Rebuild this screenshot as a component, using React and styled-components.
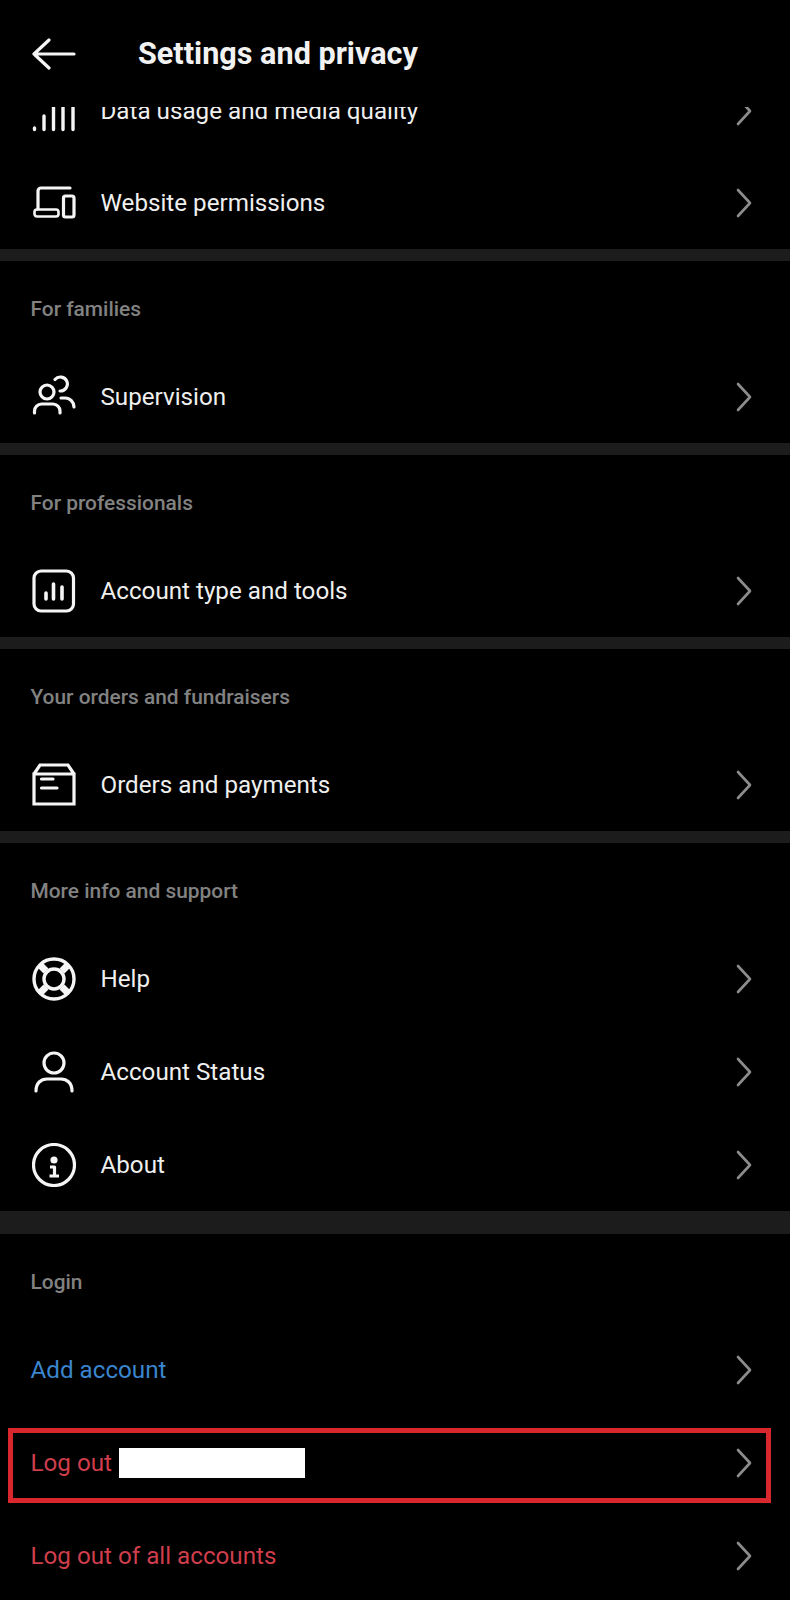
import styled, { createGlobalStyle } from "styled-components";

const GlobalStyle = createGlobalStyle`
  html, body {
    margin: 0;
    padding: 0;
    background: #000;
  }
  * {
    box-sizing: border-box;
  }
`;

const Page = styled.div`
  position: relative;
  width: 790px;
  height: 1600px;
  overflow: hidden;
  background: #000;
  font-family: Roboto, "Liberation Sans", sans-serif;
`;

const Header = styled.header`
  position: absolute;
  top: 0;
  left: 0;
  right: 0;
  z-index: 2;
  height: 107px;
  display: flex;
  align-items: center;
  padding: 3px 0 0 32px;
  background: #000;
  svg {
    margin-top: -3px;
  }
`;

const Title = styled.h1`
  margin: -2px 0 0 62px;
  font-size: 30.6px;
  line-height: 36px;
  font-weight: 700;
  color: #f2f2f2;
`;

const List = styled.main`
  padding-top: 65px;
`;

const Divider = styled.div`
  height: ${(p) => (p.$thick ? 23 : 12)}px;
  background: #1c1c1c;
`;

const SectionLabel = styled.div`
  height: 89px;
  padding: 36px 0 0 30.5px;
  font-size: 20.9px;
  line-height: 25px;
  font-weight: 500;
  color: #828282;
`;

const Row = styled.div`
  position: relative;
  height: ${(p) => p.$height || 93}px;
  display: flex;
  align-items: center;
  gap: 24.5px;
  padding: 0 38px 0 ${(p) => (p.$plain ? 30.5 : 32)}px;
`;

const RowText = styled.span`
  flex: 1;
  display: flex;
  align-items: center;
  font-size: 24.2px;
  line-height: 30px;
  color: ${(p) => p.$color || "#efefef"};
`;

const Redacted = styled.span`
  width: 186px;
  height: 30px;
  margin-left: 7px;
  background: #fff;
`;

const Highlight = styled.div`
  position: absolute;
  top: 12px;
  left: 8px;
  width: 763px;
  height: 75px;
  border: 5px solid #d9272e;
  pointer-events: none;
`;

const IconSvg = styled.svg`
  flex: none;
  fill: none;
  stroke: #f5f5f5;
  stroke-width: 3.2;
  stroke-linecap: round;
  stroke-linejoin: round;
`;

const Icon = ({ children }) => (
  <IconSvg width="44" height="44" viewBox="0 0 44 44">
    {children}
  </IconSvg>
);

const ChevronSvg = styled.svg`
  flex: none;
  fill: none;
  stroke: #8c8c8c;
  stroke-width: 2.6;
  stroke-linecap: round;
  stroke-linejoin: round;
`;

const Chevron = () => (
  <ChevronSvg width="16" height="30" viewBox="0 0 16 30">
    <path d="M2 2 L14 15 L2 28" />
  </ChevronSvg>
);

const BackArrow = () => (
  <IconSvg width="44" height="44" viewBox="0 0 44 44">
    <path d="M17 8 L2 22 L17 36 M2 22 H42" />
  </IconSvg>
);

const DataIcon = () => (
  <Icon>
    <path
      d="M2.5 39 V40.5 M12 27 V40.5 M21.5 4 V40.5 M31 4 V40.5 M41 4 V40.5"
      strokeWidth="3.4"
    />
  </Icon>
);

const WebsiteIcon = () => (
  <Icon>
    <path d="M38 7 H9 A3 3 0 0 0 6 10 V28" />
    <rect x="2.5" y="28.5" width="24" height="7" rx="2.5" strokeWidth="2.6" />
    <rect x="31.5" y="15" width="10.5" height="21" rx="2" />
  </Icon>
);

const SupervisionIcon = () => (
  <Icon>
    <circle cx="15" cy="17" r="7" />
    <path d="M2.5 38 V36 A7 7 0 0 1 9.5 29 H21 A7 7 0 0 1 28 36 V38" />
    <path d="M23 4.5 A7 7 0 1 1 28 16" />
    <path d="M29 23 H33 A9 9 0 0 1 42 32" />
  </Icon>
);

const AccountTypeIcon = () => (
  <Icon>
    <rect x="2" y="2" width="39.5" height="40" rx="7" />
    <path d="M14 24 V30 M21.5 15 V30 M30 18 V30" strokeWidth="3.6" />
  </Icon>
);

const OrdersIcon = () => (
  <Icon>
    <path d="M2 11 L8 2 H36 L42 11 M2 11 H42 V41 H2 Z" strokeLinejoin="miter" />
    <path d="M9.5 16 H21 M9.5 25 H25" />
  </Icon>
);

const HelpIcon = () => (
  <Icon>
    <circle cx="22" cy="22" r="20" strokeWidth="3.4" />
    <circle cx="22" cy="22" r="10" strokeWidth="3.4" />
    <path
      d="M14 14 L8 8 M30 14 L36 8 M14 30 L8 36 M30 30 L36 36"
      strokeWidth="7"
      strokeLinecap="butt"
    />
  </Icon>
);

const StatusIcon = () => (
  <Icon>
    <circle cx="22" cy="13" r="10" />
    <path d="M4 41 C4 33 9 29 15 29 H29 C35 29 40 33 40 41" />
  </Icon>
);

const AboutIcon = () => (
  <Icon>
    <circle cx="22" cy="22" r="20.5" />
    <circle cx="22" cy="17" r="2" fill="#f5f5f5" stroke="#f5f5f5" />
    <path d="M18 24 H22.5 V33 M17.5 33 H27" strokeLinecap="butt" />
  </Icon>
);

const ItemRow = ({ icon, label, color, height }) => (
  <Row $plain={!icon} $height={height}>
    {icon}
    <RowText $color={color}>{label}</RowText>
    <Chevron />
  </Row>
);

const BLUE = "#3a85cd";
const RED = "#cf3e4b";

export default function App() {
  return (
    <Page>
      <GlobalStyle />
      <Header>
        <BackArrow />
        <Title>Settings and privacy</Title>
      </Header>
      <List>
        <ItemRow icon={<DataIcon />} label="Data usage and media quality" height={91} />
        <ItemRow icon={<WebsiteIcon />} label="Website permissions" />
        <Divider />
        <SectionLabel>For families</SectionLabel>
        <ItemRow icon={<SupervisionIcon />} label="Supervision" />
        <Divider />
        <SectionLabel>For professionals</SectionLabel>
        <ItemRow icon={<AccountTypeIcon />} label="Account type and tools" />
        <Divider />
        <SectionLabel>Your orders and fundraisers</SectionLabel>
        <ItemRow icon={<OrdersIcon />} label="Orders and payments" />
        <Divider />
        <SectionLabel>More info and support</SectionLabel>
        <ItemRow icon={<HelpIcon />} label="Help" />
        <ItemRow icon={<StatusIcon />} label="Account Status" />
        <ItemRow icon={<AboutIcon />} label="About" />
        <Divider $thick />
        <SectionLabel>Login</SectionLabel>
        <ItemRow label="Add account" color={BLUE} />
        <Row $plain>
          <RowText $color={RED}>
            Log out
            <Redacted />
          </RowText>
          <Chevron />
          <Highlight />
        </Row>
        <ItemRow label="Log out of all accounts" color={RED} />
      </List>
    </Page>
  );
}
